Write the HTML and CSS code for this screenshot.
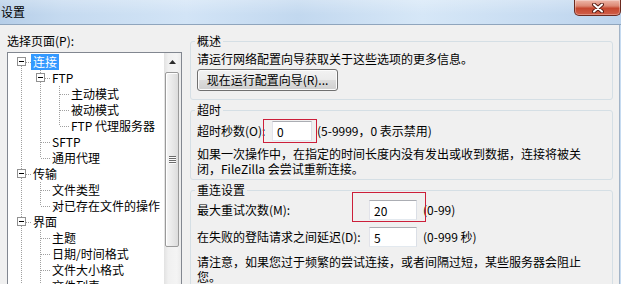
FILE: index.html
```html
<!DOCTYPE html>
<html lang="zh-CN">
<head>
<meta charset="utf-8">
<title>设置</title>
<link rel="stylesheet" href="styles.css">
</head>
<body>
<div class="window">
  <div class="titlebar">
    <span class="title">设置</span>
    <div class="close">
      <svg width="12" height="10" viewBox="0 0 12 10">
        <path d="M2 1.5 L10 8.5 M10 1.5 L2 8.5" stroke="#5a1f16" stroke-width="4" stroke-linecap="round"/>
        <path d="M2 1.5 L10 8.5 M10 1.5 L2 8.5" stroke="#ffffff" stroke-width="2" stroke-linecap="round"/>
      </svg>
    </div>
  </div>
  <div class="client">
    <div class="left">
      <div class="pick-label">选择页面(P):</div>
      <div class="tree">
        <div class="tree-list">
          <div class="row"><span class="c first"><i class="box"></i></span><span class="t sel">连接</span></div>
          <div class="row"><span class="c pipe"></span><span class="c tee"><i class="box"></i></span><span class="t">FTP</span></div>
          <div class="row"><span class="c pipe"></span><span class="c pipe"></span><span class="c tee"></span><span class="t">主动模式</span></div>
          <div class="row"><span class="c pipe"></span><span class="c pipe"></span><span class="c tee"></span><span class="t">被动模式</span></div>
          <div class="row"><span class="c pipe"></span><span class="c pipe"></span><span class="c elbow"></span><span class="t">FTP 代理服务器</span></div>
          <div class="row"><span class="c pipe"></span><span class="c tee"></span><span class="t">SFTP</span></div>
          <div class="row"><span class="c pipe"></span><span class="c elbow"></span><span class="t">通用代理</span></div>
          <div class="row"><span class="c tee"><i class="box"></i></span><span class="t">传输</span></div>
          <div class="row"><span class="c pipe"></span><span class="c tee"></span><span class="t">文件类型</span></div>
          <div class="row"><span class="c pipe"></span><span class="c elbow"></span><span class="t">对已存在文件的操作</span></div>
          <div class="row"><span class="c tee"><i class="box"></i></span><span class="t">界面</span></div>
          <div class="row"><span class="c pipe"></span><span class="c tee"></span><span class="t">主题</span></div>
          <div class="row"><span class="c pipe"></span><span class="c tee"></span><span class="t">日期/时间格式</span></div>
          <div class="row"><span class="c pipe"></span><span class="c tee"></span><span class="t">文件大小格式</span></div>
          <div class="row"><span class="c pipe"></span><span class="c tee"></span><span class="t">文件列表</span></div>
        </div>
        <div class="vscroll">
          <div class="sb-up">
            <svg width="7" height="4" viewBox="0 0 7 4"><polygon points="0,4 3.5,0 7,4" fill="#2b2b2b"/></svg>
          </div>
          <div class="sb-thumb"><span class="grip"></span></div>
        </div>
      </div>
    </div>
    <div class="right">
      <fieldset class="group g1">
        <legend>概述</legend>
        <p class="line">请运行网络配置向导获取关于这些选项的更多信息。</p>
        <button class="btn" type="button">现在运行配置向导(R)...</button>
      </fieldset>
      <fieldset class="group g2">
        <legend>超时</legend>
        <div class="field-row">
          <label class="lbl-timeout">超时秒数(O):</label>
          <input class="num w40" type="text" value="0">
          <span class="hint">(5-9999，0 表示禁用)</span>
        </div>
        <p class="para p2">如果一次操作中，在指定的时间长度内没有发出或收到数据，连接将被关<br>闭，FileZilla 会尝试重新连接。</p>
      </fieldset>
      <fieldset class="group g3">
        <legend>重连设置</legend>
        <div class="grid">
          <label>最大重试次数(M):</label>
          <input class="num w48" type="text" value="20">
          <span class="hint">(0-99)</span>
          <label>在失败的登陆请求之间延迟(D):</label>
          <input class="num w48" type="text" value="5">
          <span class="hint">(0-999 秒)</span>
        </div>
        <p class="para p3">请注意，如果您过于频繁的尝试连接，或者间隔过短，某些服务器会阻止<br>您。</p>
      </fieldset>
    </div>
  </div>
  <div class="mark mark1"></div>
  <div class="mark mark2"></div>
</div>
</body>
</html>
```

FILE: styles.css
```css
* { box-sizing: border-box; }
html, body { margin: 0; padding: 0; }
body {
  width: 621px;
  height: 284px;
  overflow: hidden;
  background: #c6dbf1;
  font-family: "Noto Sans CJK SC", "Noto Sans", sans-serif;
  font-size: 12px;
  color: #000;
}
.window { position: relative; width: 621px; height: 284px; }

.titlebar {
  height: 25px;
  display: flex;
  justify-content: space-between;
  align-items: flex-start;
  border-bottom: 1px solid #8fa5bd;
  background:
    linear-gradient(to bottom, rgba(255,255,255,0.25), rgba(255,255,255,0) 60%),
    linear-gradient(to right, #b6cee8 0%, #c5daf0 10%, #d2e4f6 30%, #c2d8ef 48%, #d6e7f7 68%, #c6dbf1 88%, #bcd3ec 100%);
}
.title { line-height: 16px; padding: 4px 0 0 1px; }
.close {
  width: 47px;
  height: 16px;
  border: 1px solid #6b2a1f;
  border-top: 0;
  border-radius: 0 0 5px 5px;
  background: linear-gradient(to bottom, #eeb8aa 0%, #dc8874 40%, #c5472f 55%, #d1604a 100%);
  box-shadow: inset 0 0 0 1px rgba(255,255,255,0.3);
  display: flex;
  align-items: center;
  justify-content: center;
}

.client {
  display: flex;
  gap: 8px;
  width: 620px;
  height: 259px;
  padding: 8px 0 0 7px;
  background: #f0f0f0;
  border-right: 1px solid #a3b4c7;
}

/* left */
.left { width: 175px; flex: none; }
.pick-label { line-height: 16px; height: 16px; }
.tree {
  margin-top: 3px;
  height: 240px;
  border: 1px solid #828790;
  background: #fff;
  display: flex;
}
.tree-list { flex: 1; overflow: hidden; padding: 1px 0 0 4px; }
.row { display: flex; height: 16px; align-items: flex-start; white-space: nowrap; }
.t { line-height: 16px; height: 16px; padding: 0 2px; }
.t.sel { background: #3399ff; color: #fff; }

.c {
  width: 19px;
  height: 16px;
  flex: none;
  background-repeat: no-repeat;
}
.c.pipe {
  background-image: repeating-linear-gradient(to bottom, #a0a0a0 0 1px, transparent 1px 2px);
  background-size: 1px 16px;
  background-position: 9px 0;
}
.c.tee {
  background-image:
    repeating-linear-gradient(to bottom, #a0a0a0 0 1px, transparent 1px 2px),
    repeating-linear-gradient(to right, #a0a0a0 0 1px, transparent 1px 2px);
  background-size: 1px 16px, 9px 1px;
  background-position: 9px 0, 10px 8px;
}
.c.elbow {
  background-image:
    repeating-linear-gradient(to bottom, #a0a0a0 0 1px, transparent 1px 2px),
    repeating-linear-gradient(to right, #a0a0a0 0 1px, transparent 1px 2px);
  background-size: 1px 8px, 9px 1px;
  background-position: 9px 0, 10px 8px;
}
.c.first {
  background-image:
    repeating-linear-gradient(to bottom, #a0a0a0 0 1px, transparent 1px 2px),
    repeating-linear-gradient(to right, #a0a0a0 0 1px, transparent 1px 2px);
  background-size: 1px 8px, 9px 1px;
  background-position: 9px 8px, 10px 8px;
}
.box {
  display: block;
  width: 9px;
  height: 9px;
  margin: 3px 0 0 5px;
  border: 1px solid #919191;
  background: #fff linear-gradient(#000, #000) no-repeat 1px 3px / 5px 1px;
}

.vscroll {
  width: 17px;
  flex: none;
  background: linear-gradient(to right, #e2e2e2, #f0f0f0 25%, #f4f4f4 75%, #ebebeb);
  display: flex;
  flex-direction: column;
}
.sb-up {
  height: 17px;
  display: flex;
  align-items: center;
  justify-content: center;
}
.sb-thumb {
  margin: 2px 0 0 1px;
  width: 14px;
  height: 175px;
  border: 1px solid #9a9a9a;
  border-radius: 2px;
  background: linear-gradient(to right, #f6f6f6, #e9e9e9 50%, #dcdcdc);
  box-shadow: inset 1px 1px 0 #fff;
  display: flex;
  align-items: center;
  justify-content: center;
}
.grip {
  width: 7px;
  height: 8px;
  background: repeating-linear-gradient(to bottom, #6a6a6a 0 1px, #fbfbfb 1px 2px);
}

/* right */
.right { width: 423px; flex: none; }
.group {
  margin: 0;
  min-width: 0;
  border: 1px solid #d5dfe5;
  border-radius: 3px;
  padding: 2px 6px 8px 6px;
}
.group + .group { margin-top: 2px; }
.group legend {
  padding: 0 2px;
  margin-left: -2px;
  line-height: 16px;
  height: 16px;
}
.line { margin: 0; line-height: 16px; }
.btn {
  display: block;
  margin-top: 2px;
  width: 141px;
  height: 22px;
  padding: 0;
  font: inherit;
  color: #000;
  line-height: 18px;
  border: 1px solid #707070;
  border-radius: 3px;
  background: linear-gradient(to bottom, #f2f2f2 0%, #ebebeb 50%, #dddddd 51%, #cfcfcf 100%);
  box-shadow: inset 0 0 0 1px #fcfcfc;
  text-align: center;
}

.g2 { padding: 3px 6px 3px 6px; }
.field-row { display: flex; align-items: center; height: 20px; }
.lbl-timeout { width: 75px; flex: none; line-height: 16px; }
.num {
  height: 20px;
  font: inherit;
  color: #000;
  line-height: 16px;
  padding: 0 0 0 4px;
  border: 1px solid;
  border-color: #abadb3 #dbdfe6 #e3e9ef #e2e3ea;
  background: #fff;
  outline: none;
}
.w40 { width: 40px; }
.w48 { width: 48px; }
.field-row .hint { margin-left: 5px; }
.hint { line-height: 16px; white-space: nowrap; }
.para { margin: 5px 0 0 0; line-height: 15px; white-space: nowrap; }

.g3 { padding: 2px 6px 8px 6px; }
.grid {
  display: grid;
  grid-template-columns: 166px 48px auto;
  grid-auto-rows: 20px;
  column-gap: 6px;
  row-gap: 7px;
  align-items: center;
}
.grid label { line-height: 16px; white-space: nowrap; }
.p3 { margin-top: 7px; }

/* red annotation rectangles drawn over the dialog */
.mark {
  position: absolute;
  border: 1px solid #cc1f3a;
  pointer-events: none;
}
.mark1 { left: 263px; top: 119px; width: 54px; height: 24px; }
.mark2 { left: 352px; top: 192px; width: 74px; height: 30px; }
```
